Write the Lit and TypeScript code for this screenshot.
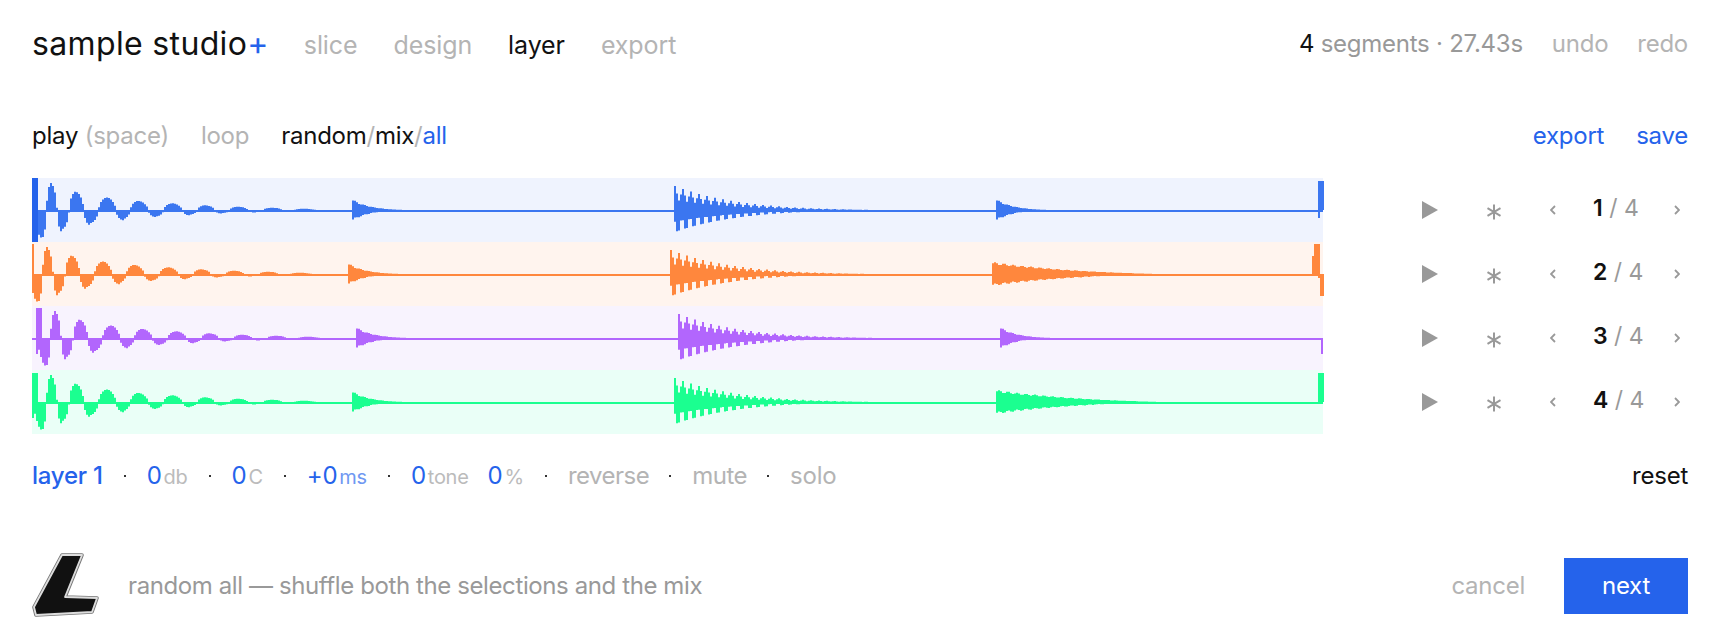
import { LitElement, html, css, svg } from "lit";
import { customElement } from "lit/decorators.js";

// extrema of the ringing kick, [t px from start, amplitude px]
const KICK: [number, number][] = [
  [0, 0], [10, -28], [19, 26], [30, -19], [44, 18], [58, -13], [75, 12.3], [91, -8.7], [106, 9],
  [124, -6], [140, 6.7], [158, -4.5], [173, 4.7], [190, -3], [206, 3.3], [223, -2], [240, 2.3],
  [256, -1], [271, 1.3], [285, 0],
];

type Bar = [number, number, number, number];

interface Layer {
  name: string;
  kick: number;
  hat: number;
  snare: number;
  last: number;
  lastLen: number;
  extra: Bar[];
}

const LAYERS: Layer[] = [
  { name: "blue", kick: 32, hat: 352, snare: 674, last: 996, lastLen: 54, extra: [[1318, 181, 6, 29], [1318, 210, 2, 8]] },
  { name: "orange", kick: 28, hat: 348, snare: 670, last: 992, lastLen: 165, extra: [[32, 244, 2, 30], [1312, 256, 6, 18], [1314, 244, 6, 30], [1318, 270, 2, 8], [1320, 274, 4, 22]] },
  { name: "purple", kick: 36, hat: 356, snare: 678, last: 1000, lastLen: 54, extra: [[36, 308, 6, 30], [36, 338, 2, 16], [1321, 338, 2, 16]] },
  { name: "green", kick: 32, hat: 352, snare: 674, last: 996, lastLen: 165, extra: [[32, 373, 6, 29], [32, 402, 2, 16], [1318, 373, 6, 29]] },
];

function kickAt(t: number) {
  for (let i = 0; i < KICK.length - 1; i++) {
    const [t0, v0] = KICK[i];
    const [t1, v1] = KICK[i + 1];
    if (t >= t0 && t <= t1) {
      const k = (1 - Math.cos((Math.PI * (t - t0)) / (t1 - t0))) / 2;
      const v = v0 + (v1 - v0) * k;
      // fatten the lobes, they are rounder than a plain sine
      const peak = Math.max(Math.abs(v0), Math.abs(v1));
      return Math.sign(v) * peak * Math.pow(Math.abs(v) / peak, 0.55);
    }
  }
  return 0;
}

function wavePath(l: Layer, center: number) {
  const bars: Bar[] = [];
  const add = (x: number, w: number, top: number, bottom: number) => {
    bars.push([x, center - top, w, top + bottom]);
  };

  for (let x = Math.max(l.kick, 32); x < l.kick + 285; x += 2) {
    const v = kickAt(x - l.kick + 1);
    add(x, 2, Math.max(v, 0), Math.max(-v, 0));
  }

  const burst = (start: number, len: number, amp: number, tau: number) => {
    for (let x = start; x < start + len; x += 2) {
      const t = x - start;
      const env = amp * Math.exp(-t / tau) * (1 - Math.pow(t / len, 3));
      const wob = 0.9 + 0.1 * Math.sin(t * 0.7);
      add(x, 2, env * wob, env * 0.9 * (1.9 - wob));
    }
  };
  burst(l.hat, 56, 10.5, 17);
  burst(l.last, l.lastLen, l.lastLen > 100 ? 12 : 10.5, l.lastLen > 100 ? 80 : 17);

  for (let x = l.snare; x < l.snare + 208; x += 2) {
    const t = x - l.snare;
    const env = 24 * Math.exp(-t / 60) * (1 - Math.pow(t / 208, 3));
    const up = (Math.cos((2 * Math.PI * t) / 8) + 1) / 2;
    const down = (Math.cos((2 * Math.PI * (t - 3)) / 8) + 1) / 2;
    add(x, 2, env * (0.42 + 0.58 * up), env * (0.4 + 0.6 * down));
  }

  for (const [x, y, w, h] of l.extra) bars.push([x, y, w, h]);
  bars.push([32, center, 1291, 2]);
  return bars.map(([x, y, w, h]) => `M${x} ${y.toFixed(1)}h${w}v${h.toFixed(1)}h${-w}z`).join("");
}

@customElement("app-root")
export class AppRoot extends LitElement {
  static styles = css`
    :host {
      display: block;
      height: 640px;
      box-sizing: border-box;
      padding: 0 32px;
      background: #fff;
      color: #111;
      font-family: Inter, "Liberation Sans", sans-serif;
      font-size: 24px;
      line-height: 28px;
      letter-spacing: -0.25px;
      overflow: hidden;
    }
    .row {
      display: flex;
      align-items: center;
    }
    .spread {
      justify-content: space-between;
    }
    .muted {
      color: #b4b4b4;
    }
    .grey {
      color: #999;
    }
    .ink {
      color: #111;
    }
    .blue {
      color: #2563eb;
    }
    .header {
      height: 86px;
      padding-top: 1px;
      box-sizing: border-box;
    }
    .title {
      font-size: 32px;
      margin-right: 35px;
      letter-spacing: 0.35px;
    }
    .nav,
    .links {
      display: flex;
    }
    .nav {
      gap: 36px;
      padding-top: 3px;
      font-size: 25px;
      letter-spacing: -0.1px;
    }
    .links {
      gap: 29px;
    }
    .toolbar {
      height: 54px;
      margin-top: 23px;
      margin-bottom: 15px;
    }
    .toolbar .links {
      gap: 32px;
    }
    .toolbar-left {
      display: flex;
      gap: 32px;
    }
    .tracks {
      display: flex;
      height: 256px;
    }
    .waves {
      width: 1291px;
      height: 256px;
      flex: none;
      display: grid;
      grid-template-rows: repeat(4, 64px);
      position: relative;
    }
    .waves svg {
      position: absolute;
      left: -32px;
      top: -178px;
      width: 1400px;
      height: 500px;
      overflow: visible;
    }
    .bg-blue { background: #eff3fe; }
    .bg-orange { background: #fff4ee; }
    .bg-purple { background: #f8f3fe; }
    .bg-green { background: #eafff7; }
    .w-blue { fill: #3b76f0; }
    .w-orange { fill: #ff873d; }
    .w-purple { fill: #b266fd; }
    .w-green { fill: #1bff90; }
    .w-strong { fill: #2563eb; }
    .controls {
      flex: 1;
      display: grid;
      grid-template-rows: repeat(4, 64px);
    }
    .control {
      display: grid;
      grid-template-columns: 64px 64px 43px 81px 1fr;
      padding-left: 99px;
      align-items: center;
      height: 64px;
    }
    .control svg {
      display: block;
    }
    .play-i {
      width: 16px;
      height: 18px;
      fill: #999;
    }
    .star {
      width: 16px;
      height: 16px;
      margin-top: 3px;
      stroke: #999;
      stroke-width: 2;
      fill: none;
    }
    .chev {
      width: 6px;
      height: 10px;
      margin-top: -1px;
      stroke: #999;
      stroke-width: 1.8;
      fill: none;
    }
    .count {
      font-size: 23px;
      letter-spacing: 0;
      color: #999;
      white-space: nowrap;
      margin-top: -5px;
    }
    .count b {
      color: #111;
      font-weight: 600;
    }
    .params {
      height: 48px;
      margin-top: 18px;
    }
    .params-left {
      display: flex;
      align-items: center;
    }
    .layer {
      font-weight: 500;
    }
    .dot {
      width: 4px;
      height: 2px;
      margin: 0 20px;
      display: flex;
      justify-content: center;
      align-items: center;
    }
    .dot::before {
      content: "";
      width: 2px;
      height: 2px;
      background: #333;
    }
    .unit {
      font-size: 20px;
      margin-left: 2px;
      color: #bbb;
      padding-top: 2px;
    }
    .unit-blue {
      color: #6f98f2;
    }
    .gap {
      margin-left: 19px;
    }
    .tight {
      letter-spacing: -0.5px;
      margin-right: -1px;
    }
    .footer {
      margin-top: 52px;
      height: 68px;
    }
    .footer-left {
      display: flex;
      align-items: center;
      gap: 26px;
      letter-spacing: -0.4px;
    }
    .logo {
      width: 70px;
      height: 68px;
      display: block;
    }
    .footer-right {
      display: flex;
      align-items: center;
      gap: 39px;
    }
    .next {
      width: 124px;
      height: 56px;
      background: #2563eb;
      color: #fff;
      display: flex;
      align-items: center;
      justify-content: center;
    }
  `;

  renderControl(n: number) {
    return html`
      <div class="control">
        <svg class="play-i" viewBox="0 0 16 18"><path d="M0 0L16 9L0 18z"></path></svg>
        <svg class="star" viewBox="0 0 16 16"><path d="M8 0.5V15.5M1.5 4.2L14.5 11.8M14.5 4.2L1.5 11.8"></path></svg>
        <svg class="chev" viewBox="0 0 6 10"><path d="M5 1L1 5L5 9"></path></svg>
        <span class="count"><b>${n}</b> / 4</span>
        <svg class="chev" viewBox="0 0 6 10"><path d="M1 1L5 5L1 9"></path></svg>
      </div>
    `;
  }

  render() {
    return html`
      <div class="row spread header">
        <div class="row">
          <div class="title">sample studio<span class="blue">+</span></div>
          <div class="nav">
            <span class="muted">slice</span>
            <span class="muted">design</span>
            <span>layer</span>
            <span class="muted">export</span>
          </div>
        </div>
        <div class="links">
          <span class="grey"><span class="ink">4</span> segments · 27.43s</span>
          <span class="muted">undo</span>
          <span class="muted">redo</span>
        </div>
      </div>

      <div class="row spread toolbar">
        <div class="toolbar-left">
          <span>play <span class="muted">(space)</span></span>
          <span class="muted">loop</span>
          <span>random<span class="muted">/</span>mix<span class="muted">/</span><span class="blue">all</span></span>
        </div>
        <div class="links blue">
          <span>export</span>
          <span>save</span>
        </div>
      </div>

      <div class="tracks">
        <div class="waves">
          ${LAYERS.map((l) => html`<div class="bg-${l.name}"></div>`)}
          <svg viewBox="0 0 1400 500">
            ${LAYERS.map((l, i) => svg`<path class="w-${l.name}" d=${wavePath(l, 210 + i * 64)}></path>`)}
            <path class="w-strong" d="M32 178h6v64h-6z"></path>
          </svg>
        </div>
        <div class="controls">${[1, 2, 3, 4].map((n) => this.renderControl(n))}</div>
      </div>

      <div class="row spread params">
        <div class="params-left">
          <span class="blue layer">layer 1</span>
          <span class="dot"></span>
          <span class="blue">0</span><span class="unit">db</span>
          <span class="dot"></span>
          <span class="blue">0</span><span class="unit">C</span>
          <span class="dot"></span>
          <span class="blue">+0</span><span class="unit unit-blue">ms</span>
          <span class="dot"></span>
          <span class="blue">0</span><span class="unit">tone</span>
          <span class="blue gap">0</span><span class="unit">%</span>
          <span class="dot"></span>
          <span class="muted tight">reverse</span>
          <span class="dot"></span>
          <span class="muted tight">mute</span>
          <span class="dot"></span>
          <span class="muted">solo</span>
        </div>
        <span>reset</span>
      </div>

      <div class="row spread footer">
        <div class="footer-left">
          <svg class="logo" viewBox="0 0 70 68">
            <path d="M30 3L50 3L33 45L65 46L60 60L4 63L2 55z" fill="#111" stroke="#777" stroke-width="3.6" stroke-linejoin="round"></path>
            <path d="M30 3L50 3L33 45L65 46L60 60L4 63L2 55z" fill="#111" stroke="#ddd" stroke-width="1.8" stroke-linejoin="round"></path>
          </svg>
          <span class="grey">random all — shuffle both the selections and the mix</span>
        </div>
        <div class="footer-right">
          <span class="muted">cancel</span>
          <span class="next">next</span>
        </div>
      </div>
    `;
  }
}
